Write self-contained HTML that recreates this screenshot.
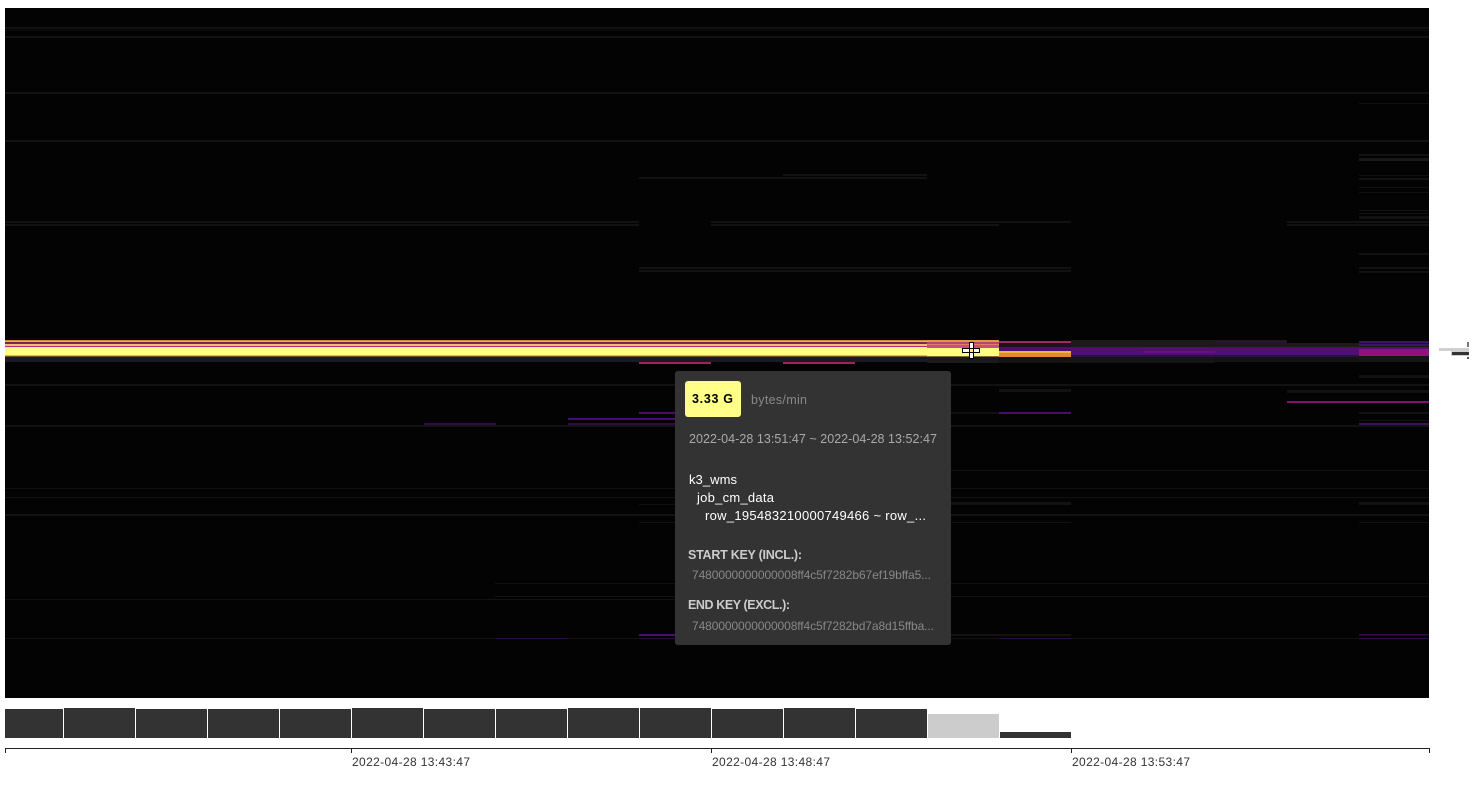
<!DOCTYPE html>
<html>
<head>
<meta charset="utf-8">
<style>
html,body{margin:0;padding:0;background:#fff;width:1476px;height:788px;overflow:hidden}
svg{display:block;position:absolute;left:0;top:0}
text{font-family:"Liberation Sans",sans-serif}
</style>
</head>
<body>
<svg width="1476" height="788" viewBox="0 0 1476 788" xmlns="http://www.w3.org/2000/svg">
<g shape-rendering="crispEdges">
<rect x="5" y="8" width="1424" height="690" fill="#030303"/>
<!-- faint lines -->
<g fill="#121212">
<rect x="5" y="27" width="1424" height="2"/>
<rect x="5" y="30" width="1424" height="1" fill="#0e0e0e"/>
<rect x="5" y="36" width="1424" height="2"/>
<rect x="5" y="92" width="1424" height="2"/>
<rect x="1359" y="103" width="70" height="1"/>
<rect x="5" y="140" width="1424" height="2"/>
<rect x="1359" y="154" width="70" height="2"/>
<rect x="1359" y="158" width="70" height="3" fill="#181818"/>
<rect x="1359" y="175" width="70" height="1"/>
<rect x="1359" y="178" width="70" height="2"/>
<rect x="1359" y="187" width="70" height="1"/>
<rect x="1359" y="192" width="70" height="1"/>
<rect x="1359" y="210" width="70" height="1"/>
<rect x="1359" y="213" width="70" height="1"/>
<rect x="1359" y="216" width="70" height="3"/>
<rect x="783" y="174" width="144" height="2"/>
<rect x="639" y="177" width="288" height="2"/>
<rect x="5" y="221" width="634" height="2"/>
<rect x="5" y="224" width="634" height="2"/>
<rect x="711" y="221" width="360" height="2"/>
<rect x="711" y="224" width="288" height="2"/>
<rect x="1287" y="221" width="142" height="2"/>
<rect x="1287" y="224" width="142" height="2"/>
<rect x="1359" y="253" width="70" height="2"/>
<rect x="639" y="267" width="432" height="2"/>
<rect x="639" y="270" width="432" height="2"/>
<rect x="1359" y="267" width="70" height="2"/>
<rect x="1359" y="271" width="70" height="2"/>
<rect x="5" y="384" width="1424" height="2"/>
<rect x="1359" y="375" width="70" height="3"/>
<rect x="999" y="389" width="72" height="3"/>
<rect x="1287" y="390" width="142" height="3"/>
<rect x="5" y="425" width="1424" height="2"/>
<rect x="951" y="412" width="48" height="2" fill="#0f0f0f"/>
<rect x="1359" y="412" width="70" height="2"/>
<rect x="1359" y="420" width="70" height="1"/>
<rect x="675" y="470" width="754" height="1"/>
<rect x="5" y="488" width="1424" height="1"/>
<rect x="5" y="497" width="1424" height="1"/>
<rect x="639" y="504" width="432" height="1"/>
<rect x="951" y="502" width="120" height="3"/>
<rect x="1359" y="502" width="70" height="3"/>
<rect x="5" y="514" width="1424" height="2"/>
<rect x="639" y="522" width="432" height="1"/>
<rect x="1359" y="522" width="70" height="1"/>
<rect x="495" y="583" width="934" height="1"/>
<rect x="495" y="596" width="934" height="1"/>
<rect x="5" y="599" width="670" height="1"/>
<rect x="951" y="634" width="120" height="2"/>
<rect x="1359" y="634" width="70" height="2"/>
<rect x="5" y="638" width="1424" height="1"/>
</g>
<!-- purple / magenta fragments -->
<g fill="#3d0d5f">
<rect x="424" y="423" width="72" height="2" fill="#2e0d45"/>
<rect x="568" y="418" width="107" height="2" fill="#480d70"/>
<rect x="568" y="423" width="107" height="2" fill="#2e0d45"/>
<rect x="639" y="412" width="36" height="2" fill="#480d70"/>
<rect x="496" y="638" width="72" height="1" fill="#2e0d45"/>
<rect x="639" y="634" width="36" height="2" fill="#480d70"/>
<rect x="639" y="638" width="36" height="1" fill="#2e0d45"/>
<rect x="999" y="412" width="72" height="2" fill="#480d70"/>
<rect x="1287" y="401" width="142" height="2" fill="#8a0c78"/>
<rect x="1359" y="423" width="70" height="2" fill="#3a1059"/>
<rect x="999" y="638" width="72" height="1" fill="#2e0d45"/>
<rect x="1359" y="638" width="70" height="1" fill="#2e0d45"/>
<rect x="1359" y="634" width="70" height="1" fill="#2e0d45"/>
<rect x="639" y="362" width="72" height="2" fill="#a3205f"/>
<rect x="783" y="362" width="72" height="2" fill="#a3205f"/>
</g>
<!-- main band: left -->
<rect x="5" y="340" width="922" height="1" fill="#c98a3b"/>
<rect x="5" y="341" width="922" height="1" fill="#e8b551"/>
<rect x="5" y="342" width="922" height="2" fill="#7f2350"/>
<rect x="5" y="344" width="922" height="2" fill="#f0c060"/>
<rect x="5" y="346" width="922" height="1" fill="#b42e7c"/>
<rect x="5" y="347" width="922" height="1" fill="#fbe98a"/>
<rect x="5" y="348" width="922" height="7" fill="#ffff80"/>
<rect x="5" y="355" width="922" height="1" fill="#e0b84a"/>
<rect x="5" y="356" width="922" height="1" fill="#6f5526"/>
<rect x="5" y="357" width="922" height="5" fill="#1b1922"/>
<!-- 927-999 -->
<rect x="927" y="340" width="72" height="2" fill="#dc9a3f"/>
<rect x="927" y="342" width="72" height="2" fill="#b4486a"/>
<rect x="927" y="344" width="72" height="1" fill="#e07a6a"/>
<rect x="927" y="345" width="72" height="3" fill="#c8507a"/>
<rect x="927" y="348" width="72" height="8" fill="#ffff80"/>
<rect x="927" y="356" width="72" height="1" fill="#8a6a30"/>
<rect x="927" y="357" width="72" height="6" fill="#1a1a1a"/>
<!-- 999-1071 -->
<rect x="999" y="341" width="72" height="2" fill="#a5255d"/>
<rect x="999" y="343" width="72" height="4" fill="#1c1024"/>
<rect x="999" y="347" width="72" height="4" fill="#4c0f70"/>
<rect x="999" y="351" width="72" height="2" fill="#f3b23d"/>
<rect x="999" y="353" width="72" height="4" fill="#e48a30"/>
<rect x="999" y="357" width="72" height="6" fill="#141414"/>
<!-- 1071-1143 -->
<rect x="1071" y="340" width="216" height="7" fill="#1b1b1b"/>
<rect x="1071" y="347" width="288" height="8" fill="#4f0f74"/>
<rect x="1071" y="355" width="288" height="2" fill="#2a1432"/>
<rect x="1071" y="357" width="144" height="6" fill="#151515"/>
<rect x="1143" y="351" width="72" height="2" fill="#6f0f7e"/>
<rect x="1215" y="357" width="144" height="5" fill="#131313"/>
<rect x="1215" y="341" width="72" height="2" fill="#2a1238"/>
<rect x="1287" y="343" width="72" height="4" fill="#1b1b1b"/>
<!-- 1359-1429 -->
<rect x="1359" y="341" width="70" height="2" fill="#3b1560"/>
<rect x="1359" y="343" width="70" height="1" fill="#171717"/>
<rect x="1359" y="344" width="70" height="2" fill="#3b1560"/>
<rect x="1359" y="346" width="70" height="1" fill="#171717"/>
<rect x="1359" y="347" width="70" height="2" fill="#510f72"/>
<rect x="1359" y="349" width="70" height="7" fill="#960f80"/>
<rect x="1359" y="356" width="70" height="6" fill="#161616"/>
<!-- right-edge artefact -->
<rect x="1439" y="348" width="30" height="3" fill="#cfcfcf"/>
<rect x="1451" y="351" width="18" height="5" fill="#cfcfcf"/>
<rect x="1452" y="352" width="17" height="3" fill="#333"/>
<rect x="1467" y="342" width="2" height="5" fill="#777"/>
<rect x="1467" y="357" width="2" height="2" fill="#555"/>
<!-- bars -->
<g fill="#333">
<rect x="5" y="709" width="58" height="29"/>
<rect x="64" y="708" width="71" height="30"/>
<rect x="136" y="709" width="71" height="29"/>
<rect x="208" y="709" width="71" height="29"/>
<rect x="280" y="709" width="71" height="29"/>
<rect x="352" y="708" width="71" height="30"/>
<rect x="424" y="709" width="71" height="29"/>
<rect x="496" y="709" width="71" height="29"/>
<rect x="568" y="708" width="71" height="30"/>
<rect x="640" y="708" width="71" height="30"/>
<rect x="712" y="709" width="71" height="29"/>
<rect x="784" y="708" width="71" height="30"/>
<rect x="856" y="709" width="71" height="29"/>
<rect x="928" y="714" width="71" height="24" fill="#ccc"/>
<rect x="1000" y="732" width="71" height="6"/>
</g>
<!-- axis -->
<g fill="#222">
<rect x="5" y="748" width="1425" height="1"/>
<rect x="5" y="748" width="1" height="5"/>
<rect x="351" y="748" width="1" height="5"/>
<rect x="711" y="748" width="1" height="5"/>
<rect x="1071" y="748" width="1" height="5"/>
<rect x="1429" y="748" width="1" height="5"/>
</g>
</g>
<g font-size="12" fill="#333">
<text x="352" y="766" textLength="118" lengthAdjust="spacing">2022-04-28 13:43:47</text>
<text x="712" y="766" textLength="118" lengthAdjust="spacing">2022-04-28 13:48:47</text>
<text x="1072" y="766" textLength="118" lengthAdjust="spacing">2022-04-28 13:53:47</text>
</g>
<!-- cursor -->
<g shape-rendering="crispEdges">
<path d="M969 342h5v6h6v5h-6v6h-5v-6h-7v-5h7z" fill="#000"/>
<rect x="970" y="343" width="3" height="5" fill="#fff"/>
<rect x="970" y="353" width="3" height="5" fill="#fff"/>
<rect x="963" y="349" width="6" height="3" fill="#fff"/>
<rect x="974" y="349" width="5" height="3" fill="#fff"/>
<rect x="970" y="349" width="3" height="3" fill="#fef37c"/>
</g>
<!-- tooltip -->
<rect x="675" y="371" width="276" height="274" rx="3" fill="#333"/>
<rect x="685" y="381" width="56" height="36" rx="3" fill="#ffff88"/>
<text x="692" y="403" font-size="12.5" font-weight="bold" fill="#000" textLength="41">3.33 G</text>
<text x="751" y="404" font-size="12.5" fill="#888" textLength="56">bytes/min</text>
<text x="689" y="443" font-size="12.5" fill="#aaa" textLength="248">2022-04-28 13:51:47 ~ 2022-04-28 13:52:47</text>
<text x="689" y="484" font-size="13" fill="#fff" textLength="48">k3_wms</text>
<text x="697" y="502" font-size="13" fill="#fff" textLength="77">job_cm_data</text>
<text x="705" y="520" font-size="13" fill="#fff" textLength="221">row_195483210000749466 ~ row_...</text>
<text x="688" y="559" font-size="12.5" font-weight="bold" fill="#ccc" textLength="114">START KEY (INCL.):</text>
<text x="692" y="579" font-size="12" fill="#888" textLength="239">7480000000000008ff4c5f7282b67ef19bffa5...</text>
<text x="688" y="609" font-size="12.5" font-weight="bold" fill="#ccc" textLength="102">END KEY (EXCL.):</text>
<text x="692" y="630" font-size="12" fill="#888" textLength="242">7480000000000008ff4c5f7282bd7a8d15ffba...</text>
</svg>
</body>
</html>
